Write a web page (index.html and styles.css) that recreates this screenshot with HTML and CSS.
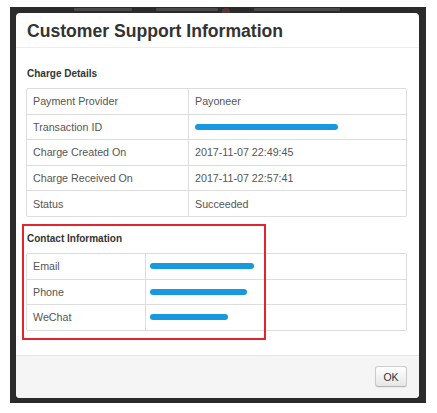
FILE: index.html
```html
<!DOCTYPE html>
<html>
<head>
<meta charset="utf-8">
<link rel="stylesheet" href="styles.css">
</head>
<body>
<div class="backdrop">
  <div class="behind">
    <span class="ghost" style="width:58px"></span>
    <span class="ghost" style="width:62px"></span>
    <span class="ghost dot"></span>
    <span class="ghost" style="width:86px"></span>
  </div>
  <div class="modal">
    <div class="modal-header">
      <h3 class="modal-title">Customer Support Information</h3>
    </div>
    <div class="modal-body">
      <h4 class="section-title">Charge Details</h4>
      <div class="info-table charge">
        <div class="row"><div class="cell key">Payment Provider</div><div class="cell val">Payoneer</div></div>
        <div class="row"><div class="cell key">Transaction ID</div><div class="cell val"><span class="redact" style="width:143px"></span></div></div>
        <div class="row"><div class="cell key">Charge Created On</div><div class="cell val">2017-11-07 22:49:45</div></div>
        <div class="row"><div class="cell key">Charge Received On</div><div class="cell val">2017-11-07 22:57:41</div></div>
        <div class="row"><div class="cell key">Status</div><div class="cell val">Succeeded</div></div>
      </div>
      <h4 class="section-title contact-title">Contact Information</h4>
      <div class="info-table contact">
        <div class="row"><div class="cell key">Email</div><div class="cell val"><span class="redact" style="width:104px"></span></div></div>
        <div class="row"><div class="cell key">Phone</div><div class="cell val"><span class="redact" style="width:97px"></span></div></div>
        <div class="row"><div class="cell key">WeChat</div><div class="cell val"><span class="redact" style="width:78px"></span></div></div>
      </div>
      <div class="highlight"></div>
    </div>
    <div class="modal-footer">
      <button class="btn">OK</button>
    </div>
  </div>
</div>
</body>
</html>
```

FILE: styles.css
```css
html, body {
  margin: 0;
  padding: 0;
  background: #ffffff;
}

body {
  font-family: "Liberation Sans", Arial, sans-serif;
  color: #555555;
  width: 437px;
  height: 413px;
  overflow: hidden;
}

.backdrop {
  margin: 7px 0 0 10px;
  width: 416px;
  height: 396px;
  background: #2b2b2b;
  box-sizing: border-box;
  padding: 0 7px 5px 6px;
}

.behind {
  height: 6px;
  display: flex;
  align-items: flex-start;
  gap: 24px;
  padding-left: 58px;
}

.ghost {
  display: block;
  height: 3px;
  margin-top: 1px;
  background: #4a4a4a;
  border-radius: 1px;
}

.ghost.dot {
  width: 8px;
  height: 5px;
  margin-left: -20px;
  background: #5a3434;
  border-radius: 4px 4px 0 0;
}

.modal {
  background: #ffffff;
  border-radius: 4px;
  height: 385px;
  display: flex;
  flex-direction: column;
  overflow: hidden;
}

.modal-header {
  padding: 8px 11px 5px;
  border-bottom: 1px solid #ececec;
  height: 21px;
}

.modal-title {
  margin: 0;
  font-size: 17.6px;
  line-height: 20px;
  font-weight: bold;
  color: #333333;
}

.modal-body {
  position: relative;
  flex: 1;
  padding: 20px 12px 0 10px;
}

.section-title {
  margin: 0 0 8px 1px;
  font-size: 10px;
  line-height: 12px;
  font-weight: bold;
  color: #333333;
}

.contact-title {
  margin-top: 16px;
}

.info-table {
  border: 1px solid #dddddd;
  border-radius: 2px;
}

.row {
  display: flex;
  height: 25.6px;
  box-sizing: border-box;
  border-top: 1px solid #dddddd;
}

.row:first-child {
  border-top: none;
  height: 24.6px;
}

.cell {
  display: flex;
  align-items: center;
  padding: 0 6px;
  font-size: 10.7px;
  color: #555555;
  white-space: nowrap;
}

.charge .key {
  width: 149px;
  border-right: 1px solid #dddddd;
}

.contact .key {
  width: 106px;
  border-right: 1px solid #dddddd;
}

.contact .val {
  padding-left: 4px;
}

.redact {
  display: inline-block;
  height: 6px;
  border-radius: 3px;
  background: #1898de;
}

.highlight {
  position: absolute;
  left: 6px;
  top: 176px;
  width: 240px;
  height: 112px;
  border: 2px solid #e2242c;
  pointer-events: none;
}

.modal-footer {
  height: 42px;
  background: #f5f5f5;
  border-top: 1px solid #e5e5e5;
  display: flex;
  justify-content: flex-end;
  align-items: flex-start;
  padding: 0 12px 0 0;
}

.btn {
  margin-top: 10px;
  width: 32px;
  height: 21px;
  padding: 0;
  font-family: "Liberation Sans", Arial, sans-serif;
  font-size: 10.5px;
  color: #333333;
  background: linear-gradient(#ffffff, #e6e6e6);
  border: 1px solid #cccccc;
  border-bottom-color: #b3b3b3;
  border-radius: 3px;
  box-shadow: 0 1px 2px rgba(0,0,0,0.05);
}
```
